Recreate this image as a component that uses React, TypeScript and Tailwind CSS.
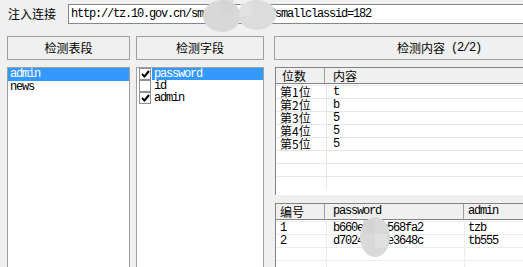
import React from "react";

const cjk = "font-['Noto_Sans_CJK_SC',sans-serif] text-[12px]";
const mono = "font-['Liberation_Mono','Noto_Sans_CJK_SC',monospace] text-[12px] tracking-[-1.2px]";

function Check({ on }: { on: boolean }) {
  return (
    <div className="ml-[2px] flex h-[12px] w-[12px] shrink-0 items-center justify-center border border-[#8f8f8f] bg-white">
      {on && (
        <svg width="9" height="8" viewBox="0 0 9 8">
          <polyline points="1,4 3.5,6.5 8,1" fill="none" stroke="#000" strokeWidth="2" />
        </svg>
      )}
    </div>
  );
}

function Button({ children, w }: { children: React.ReactNode; w: string }) {
  return (
    <div className={`${w} flex h-[24px] shrink-0 items-center justify-center whitespace-nowrap border border-[#a0a0a0] bg-[#f0f0f0] text-black ${cjk}`}>
      {children}
    </div>
  );
}

const digits = ["t", "b", "5", "5", "5"];

export default function App() {
  return (
    <div className="relative h-[267px] w-[523px] overflow-hidden bg-[#f0f0f0] text-black">
      <div className="flex w-[700px] items-center pl-[8px] pt-[4px]">
        <span className={`${cjk} shrink-0 whitespace-nowrap leading-[20px]`}>注入连接</span>
        <div className="ml-[12px] flex h-[20px] w-[600px] shrink-0 items-center border border-[#828790] bg-white pl-[2px]">
          <span className={`${mono} whitespace-nowrap`}>http://tz.10.gov.cn/smallnews.asp?smallclassid=182</span>
        </div>
      </div>

      <div className="mt-[12px] flex w-[700px] pl-[7px]">
        <div className="flex w-[123px] shrink-0 flex-col gap-[7px]">
          <Button w="w-[123px]">检测表段</Button>
          <div className="h-[210px] border border-[#a0a0a0] bg-white">
            <div className={`h-[13px] bg-[#3399ff] pl-[2px] leading-[13px] text-white ${mono}`}>admin</div>
            <div className={`h-[13px] pl-[2px] leading-[13px] ${mono}`}>news</div>
          </div>
        </div>

        <div className="ml-[6px] flex w-[128px] shrink-0 flex-col gap-[7px]">
          <Button w="w-[128px]">检测字段</Button>
          <div className="h-[210px] border border-[#a0a0a0] bg-white">
            {[
              { t: "password", on: true, sel: true },
              { t: "id", on: false, sel: false },
              { t: "admin", on: true, sel: false },
            ].map((r) => (
              <div key={r.t} className="flex h-[12px] items-center">
                <Check on={r.on} />
                <span
                  className={`ml-[1px] h-[12px] flex-1 overflow-hidden pl-[2px] leading-[12px] ${mono} ${
                    r.sel ? "bg-[#3399ff] text-white" : ""
                  }`}
                >
                  {r.t}
                </span>
              </div>
            ))}
          </div>
        </div>

        <div className="ml-[10px] flex w-[330px] shrink-0 flex-col">
          <Button w="w-[330px]">
            检测内容 <span className={`${mono} ml-[6px]`}>(2/2)</span>
          </Button>

          <div className="ml-[1px] mt-[7px] h-[128px] border-l border-t border-[#828282] bg-white">
            <div className="flex h-[16px] border-b border-[#828282] bg-[#f0f0f0]">
              <div className={`w-[49px] border-r border-[#a0a0a0] pl-[6px] leading-[15px] ${cjk}`}>位数</div>
              <div className={`flex-1 pl-[8px] leading-[15px] ${cjk}`}>内容</div>
            </div>
            <div className="pt-[1px]">
              {Array.from({ length: 8 }).map((_, i) => (
                <div key={i} className="flex h-[13px] border-t border-[#e6e6e6]">
                  <div className={`w-[51px] border-r border-[#e6e6e6] pl-[4px] leading-[12px] ${cjk}`}>
                    {i < 5 ? `第${i + 1}位` : ""}
                  </div>
                  <div className={`flex-1 pl-[6px] leading-[12px] ${mono}`}>{digits[i] ?? ""}</div>
                </div>
              ))}
            </div>
          </div>

          <div className="ml-[1px] mt-[8px] h-[80px] border-l border-t border-[#828282] bg-white">
            <div className="flex h-[16px] border-b border-[#828282] bg-[#f0f0f0]">
              <div className={`w-[49px] border-r border-[#a0a0a0] pl-[4px] leading-[15px] ${cjk}`}>编号</div>
              <div className={`w-[139px] border-r border-[#a0a0a0] pl-[8px] leading-[15px] ${mono}`}>password</div>
              <div className={`flex-1 pl-[4px] leading-[15px] ${mono}`}>admin</div>
            </div>
            <div className="pt-[1px]">
              {[
                ["1", "b660e3a0b568fa2", "tzb"],
                ["2", "d7024c9f1e3648c", "tb555"],
                ["", "", ""],
                ["", "", ""],
              ].map((r, i) => (
                <div key={i} className="flex h-[13px] border-t border-[#ececec]">
                  <div className={`w-[51px] border-r border-[#ececec] pl-[4px] leading-[12px] ${mono}`}>{r[0]}</div>
                  <div className={`w-[138px] border-r border-[#ececec] pl-[6px] leading-[12px] ${mono}`}>{r[1]}</div>
                  <div className={`flex-1 pl-[3px] leading-[12px] ${mono}`}>{r[2]}</div>
                </div>
              ))}
            </div>
          </div>
        </div>
      </div>

      <svg className="absolute left-[200px] top-0" width="80" height="34" viewBox="0 0 80 34">
        <ellipse cx="22" cy="16" rx="19" ry="16" fill="#d8d8d8" />
        <ellipse cx="57" cy="15" rx="19" ry="15" fill="#dcdcdc" />
        <rect x="20" y="0" width="14" height="14" fill="#d3d3d3" opacity="0.6" />
        <rect x="40" y="4" width="12" height="12" fill="#e2e2e2" opacity="0.7" />
      </svg>
      <svg className="absolute left-[359px] top-[216px]" width="32" height="42" viewBox="0 0 32 42">
        <ellipse cx="16" cy="21" rx="15" ry="20" fill="#d9d9d9" />
        <rect x="4" y="4" width="12" height="14" fill="#d2d2d2" opacity="0.7" />
        <rect x="16" y="18" width="12" height="14" fill="#e2e2e2" opacity="0.7" />
      </svg>
    </div>
  );
}
